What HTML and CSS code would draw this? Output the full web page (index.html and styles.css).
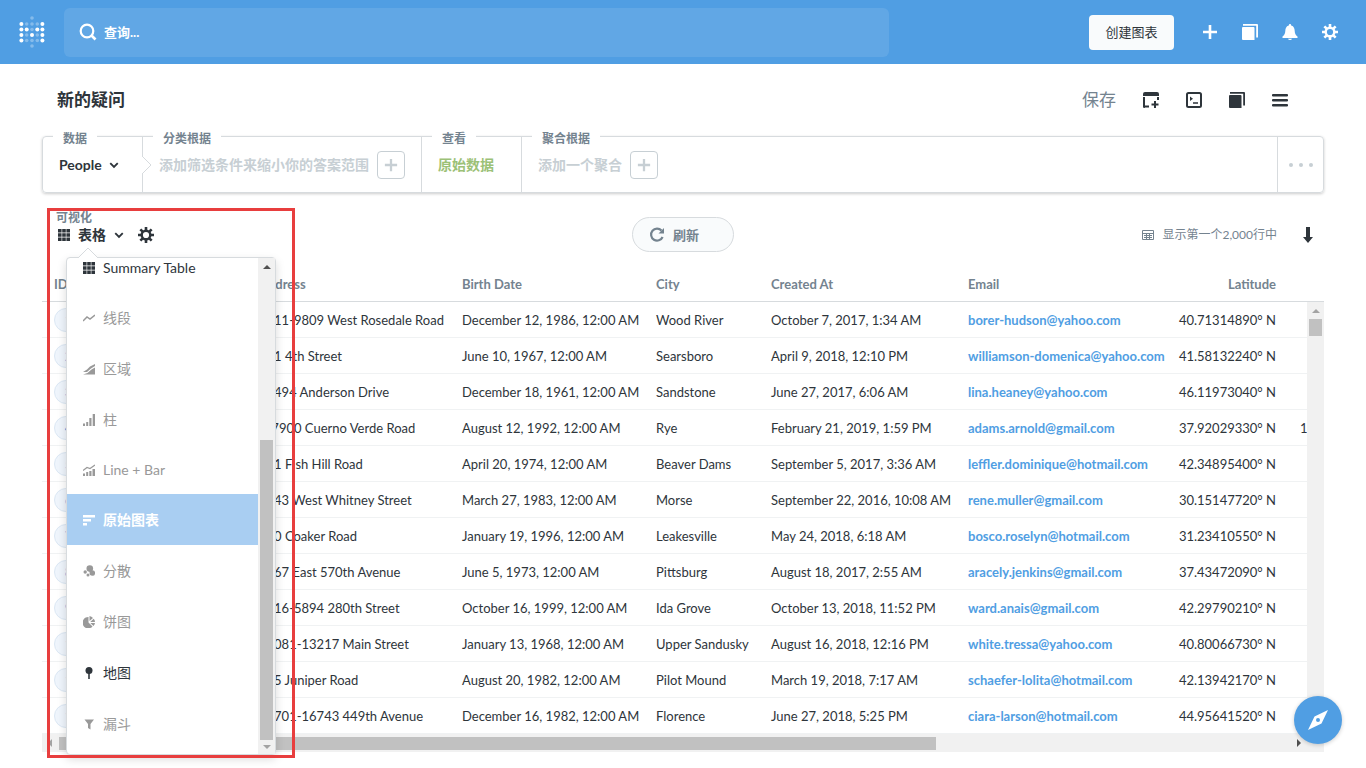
FILE: index.html
```html
<!DOCTYPE html>
<html lang="zh-CN">
<head>
  <meta charset="UTF-8">
  <meta name="viewport" content="width=device-width, initial-scale=1.0">
  <title>新的疑问</title>
  <link rel="stylesheet" href="styles.css">
</head>
<body>
  <svg class="defs" width="0" height="0">
    <symbol id="i-search" viewBox="0 0 18 18"><circle cx="8" cy="8" r="6.3" fill="none" stroke="currentColor" stroke-width="2.2"/><path d="M12.5 12.5l4 4" stroke="currentColor" stroke-width="2.6"/></symbol>
    <symbol id="i-plus" viewBox="0 0 16 16"><path d="M8 1v14M1 8h14" stroke="currentColor" stroke-width="2.6"/></symbol>
    <symbol id="i-stack" viewBox="0 0 16 16"><path fill="currentColor" d="M0 4q0-1 1-1h10.500q1 0 1 1v12H1q-1 0-1-1zM1 0H15q1 0 1 1v12.500h-1.800V1.800H1z"/></symbol>
    <symbol id="i-bell" viewBox="0 0 16 16"><path fill="currentColor" d="M8 0q1.200 0 1.200 1.400C12 2.200 12.600 4.500 12.700 7c.1 2.500 1 4.500 2.800 5.500V14H.5v-1.500C2.300 11.500 3.200 9.500 3.300 7c.1-2.500.7-4.800 3.500-5.600Q6.800 0 8 0zM6 14.800h4q-.3 1.200-2 1.200t-2-1.200z"/></symbol>
    <symbol id="i-gear" viewBox="0 0 16 16"><circle cx="8" cy="8" r="4.300" fill="none" stroke="currentColor" stroke-width="2.400"/><path d="M8 0v3M8 13v3M0 8h3M13 8h3M2.340 2.340l2.100 2.100M11.560 11.560l2.100 2.100M2.340 13.660l2.100-2.100M11.560 4.440l2.100-2.100" stroke="currentColor" stroke-width="2.600"/></symbol>
    <symbol id="i-grid" viewBox="0 0 12 12"><path fill="currentColor" d="M0 0h3.600v3.600H0zM4.200 0h3.600v3.600H4.200zM8.400 0H12v3.600H8.400zM0 4.200h3.600v3.600H0zM4.200 4.200h3.600v3.600H4.200zM8.400 4.200H12v3.600H8.400zM0 8.400h3.600V12H0zM4.200 8.400h3.600V12H4.200zM8.400 8.400H12V12H8.400z"/></symbol>
    <symbol id="i-chevron" viewBox="0 0 8 8"><path d="M1 2.500l3 3 3-3" fill="none" stroke="currentColor" stroke-width="1.500"/></symbol>
  </svg>

  <header class="nav">
    <a class="logo" href="#" aria-label="Metabase">
      <svg width="26" height="32" viewBox="0 0 26 32" fill="#fff">
        <g opacity=".3">
          <circle cx="13" cy="2" r="1.800"/><circle cx="7.700" cy="8" r="1.800"/><circle cx="13" cy="8" r="1.800"/><circle cx="18.300" cy="8" r="1.800"/>
          <circle cx="13" cy="13.500" r="1.800"/><circle cx="7.700" cy="19" r="1.800"/><circle cx="18.300" cy="19" r="1.800"/>
          <circle cx="7.700" cy="24.500" r="1.800"/><circle cx="13" cy="24.500" r="1.800"/><circle cx="18.300" cy="24.500" r="1.800"/><circle cx="13" cy="30" r="1.800"/>
        </g>
        <circle cx="2.400" cy="8" r="2"/><circle cx="23.400" cy="8" r="2"/>
        <circle cx="2.400" cy="13.500" r="2"/><circle cx="7.700" cy="13.500" r="2"/><circle cx="18.300" cy="13.500" r="2"/><circle cx="23.400" cy="13.500" r="2"/>
        <circle cx="2.400" cy="19" r="2"/><circle cx="13" cy="19" r="2"/><circle cx="23.400" cy="19" r="2"/>
        <circle cx="2.400" cy="24.500" r="2"/><circle cx="23.400" cy="24.500" r="2"/>
      </svg>
    </a>
    <label class="search">
      <svg width="18" height="18"><use href="#i-search"/></svg>
      <input type="text" placeholder="查询..." aria-label="查询">
    </label>
    <div class="nav-actions">
      <button class="create">创建图表</button>
      <a href="#" aria-label="新建"><svg width="16" height="16"><use href="#i-plus"/></svg></a>
      <a href="#" aria-label="浏览"><svg width="16" height="16"><use href="#i-stack"/></svg></a>
      <a href="#" aria-label="通知"><svg width="16" height="16"><use href="#i-bell"/></svg></a>
      <a href="#" aria-label="设置"><svg width="16" height="16"><use href="#i-gear"/></svg></a>
    </div>
  </header>

  <main>
    <div class="title-bar">
      <h1>新的疑问</h1>
      <div class="title-actions">
        <a class="save" href="#">保存</a>
        <a href="#" aria-label="添加到仪表盘"><svg width="16" height="16" viewBox="0 0 16 16"><path d="M1 5v9.500h5M15 5v3" fill="none" stroke="currentColor" stroke-width="2"/><path fill="currentColor" d="M0 4V2q0-2 2-2h12q2 0 2 2v2zM0 13h2v3q-2 0-2-2z"/><path d="M12 9v7M8.500 12.500h7" stroke="currentColor" stroke-width="2"/></svg></a>
        <a href="#" aria-label="SQL"><svg width="16" height="16" viewBox="0 0 16 16"><rect x="1" y="1" width="14" height="14" rx="1.500" fill="none" stroke="currentColor" stroke-width="2"/><path fill="currentColor" d="M4 4.500l3 2.200-3 2.200zM7 10.200h5v1.600H7z"/></svg></a>
        <a href="#" aria-label="数据参考"><svg width="16" height="16"><use href="#i-stack"/></svg></a>
        <a href="#" aria-label="菜单"><svg width="16" height="16" viewBox="0 0 16 16"><path d="M1 3.200h14M1 8.200h14M1 13.200h14" stroke="currentColor" stroke-width="2.400" stroke-linecap="round"/></svg></a>
      </div>
    </div>

    <section class="query">
      <div class="part part-data">
        <span class="legend">数据</span>
        <button class="source">People <svg width="10" height="10"><use href="#i-chevron"/></svg></button>
      </div>
      <div class="part part-filter">
        <span class="legend">分类根据</span>
        <svg class="notch" width="10" height="20" viewBox="0 0 10 20"><path d="M0 1l9 9-9 9" fill="#fff" stroke="#d7dbde"/></svg>
        <span class="hint">添加筛选条件来缩小你的答案范围</span>
        <button class="add" aria-label="添加筛选"><svg width="14" height="14"><use href="#i-plus"/></svg></button>
      </div>
      <div class="part part-view">
        <span class="legend">查看</span>
        <a class="raw" href="#">原始数据</a>
      </div>
      <div class="part part-group">
        <span class="legend">聚合根据</span>
        <span class="hint">添加一个聚合</span>
        <button class="add" aria-label="添加聚合"><svg width="14" height="14"><use href="#i-plus"/></svg></button>
      </div>
      <button class="part more" aria-label="更多"><i></i><i></i><i></i></button>
    </section>

    <section class="toolbar">
      <div class="viz">
        <span class="viz-label">可视化</span>
        <div class="viz-row">
          <button class="viz-type"><svg width="12" height="12"><use href="#i-grid"/></svg>表格<svg width="10" height="10"><use href="#i-chevron"/></svg></button>
          <button class="viz-set" aria-label="图表设置"><svg width="16" height="16"><use href="#i-gear"/></svg></button>
        </div>

        <div class="menu">
          <svg class="menu-tip" width="22" height="11" viewBox="0 0 22 11"><path d="M1 11L11 1l10 10" fill="#fff" stroke="#d7dbde"/></svg>
          <ul>
            <li class="latin on"><svg width="12" height="12"><use href="#i-grid"/></svg>Summary Table</li>
            <li><svg width="12" height="12" viewBox="0 0 12 12"><path d="M0 9l4-4 3 2 5-4" fill="none" stroke="currentColor" stroke-width="1.500"/></svg>线段</li>
            <li><svg width="12" height="12" viewBox="0 0 12 12"><path fill="currentColor" d="M0 9l4-2.500 3-3L12 1v2L8 5.500 4 9zM0 11.500L4.500 10 8.500 6.500 12 4.500v7z"/></svg>区域</li>
            <li><svg width="12" height="12" viewBox="0 0 12 12"><path fill="currentColor" d="M0 9.500h2V12H0zM3.200 8h2v4h-2zM6.300 4h2.200v8H6.300zM9.700 0H12v12H9.700z"/></svg>柱</li>
            <li class="latin"><svg width="12" height="12" viewBox="0 0 12 12"><path fill="currentColor" d="M0 9.500h2V12H0zM3.200 8h2v4h-2zM6.300 7h2.200v5H6.300zM9.500 5H12v7H9.500z"/><path d="M0 6.500l4-3 3 1 5-3.500" fill="none" stroke="currentColor" stroke-width="1.200"/></svg>Line + Bar</li>
            <li class="active"><svg width="12" height="12" viewBox="0 0 12 12"><path fill="currentColor" d="M0 1h12v2.500H0zM0 5h8v2.500H0zM0 9h4v2.500H0z"/></svg>原始图表</li>
            <li><svg width="12" height="12" viewBox="0 0 12 12"><g fill="currentColor"><circle cx="6.800" cy="3.600" r="3.300"/><circle cx="9.300" cy="8" r="2.800"/><circle cx="2.200" cy="7" r="1.700"/><circle cx="5" cy="10" r="1.500"/></g></svg>分散</li>
            <li><svg width="12" height="12" viewBox="0 0 12 12"><path fill="currentColor" d="M5.500 1v5.500l4 4A5.700 5.700 0 1 1 5.500 1zM6.500 0A5.500 5.500 0 0 1 10 2L6.500 5zM10.700 2.700Q12 4.300 12 6H7.200zM7.300 7H12q-.2 1.700-1.500 3z"/></svg>饼图</li>
            <li class="on"><svg width="12" height="12" viewBox="0 0 12 12"><circle cx="6" cy="3.500" r="3.500" fill="currentColor"/><path d="M6 6v6" stroke="currentColor" stroke-width="1.600"/></svg>地图</li>
            <li><svg width="12" height="12" viewBox="0 0 12 12"><path fill="currentColor" d="M1.500 1.500h9.500L7.500 6v5.500L5 10V6z"/></svg>漏斗</li>
          </ul>
          <div class="menu-scroll"><b class="arrow up dark"></b><i></i><b class="arrow down"></b></div>
        </div>
      </div>

      <button class="refresh"><svg width="16" height="16" viewBox="0 0 16 16"><path d="M12.500 3.500A6 6 0 1 0 13.600 10" fill="none" stroke="currentColor" stroke-width="2.200"/><path fill="currentColor" d="M15 1v5.500H9.500z"/></svg>刷新</button>

      <div class="info">
        <svg width="12" height="12" viewBox="0 0 12 12"><path d="M.5 1.500h11v9H.5zM.5 4.500h11M2 6.500h8M2 8.500h8M4.500 4.500v6M7.500 4.500v6" fill="none" stroke="currentColor"/></svg>
        <span>显示第一个2,000行中</span>
        <a href="#" aria-label="下载"><svg width="10" height="16" viewBox="0 0 10 16"><path fill="currentColor" d="M3 0h4v10h3l-5 6-5-6h3z"/></svg></a>
      </div>
      <div class="marker"></div>
    </section>

    <section class="results">
      <div class="clip">
        <table>
          <colgroup><col class="c-id"><col class="c-addr"><col class="c-birth"><col class="c-city"><col class="c-created"><col class="c-email"><col class="c-lat"><col class="c-lon"></colgroup>
          <thead>
            <tr><th>ID</th><th>Address</th><th>Birth Date</th><th>City</th><th>Created At</th><th>Email</th><th class="num">Latitude</th><th></th></tr>
          </thead>
          <tbody>
            <tr><td><a class="pk" href="#">1</a></td><td>9611-9809 West Rosedale Road</td><td>December 12, 1986, 12:00 AM</td><td>Wood River</td><td>October 7, 2017, 1:34 AM</td><td><a href="#">borer-hudson@yahoo.com</a></td><td class="num">40.71314890° N</td><td></td></tr>
            <tr><td><a class="pk" href="#">2</a></td><td>101 4th Street</td><td>June 10, 1967, 12:00 AM</td><td>Searsboro</td><td>April 9, 2018, 12:10 PM</td><td><a href="#">williamson-domenica@yahoo.com</a></td><td class="num">41.58132240° N</td><td></td></tr>
            <tr><td><a class="pk" href="#">3</a></td><td>29494 Anderson Drive</td><td>December 18, 1961, 12:00 AM</td><td>Sandstone</td><td>June 27, 2017, 6:06 AM</td><td><a href="#">lina.heaney@yahoo.com</a></td><td class="num">46.11973040° N</td><td></td></tr>
            <tr><td><a class="pk" href="#">4</a></td><td>2-7900 Cuerno Verde Road</td><td>August 12, 1992, 12:00 AM</td><td>Rye</td><td>February 21, 2019, 1:59 PM</td><td><a href="#">adams.arnold@gmail.com</a></td><td class="num">37.92029330° N</td><td>1</td></tr>
            <tr><td><a class="pk" href="#">5</a></td><td>761 Fish Hill Road</td><td>April 20, 1974, 12:00 AM</td><td>Beaver Dams</td><td>September 5, 2017, 3:36 AM</td><td><a href="#">leffler.dominique@hotmail.com</a></td><td class="num">42.34895400° N</td><td></td></tr>
            <tr><td><a class="pk" href="#">6</a></td><td>1243 West Whitney Street</td><td>March 27, 1983, 12:00 AM</td><td>Morse</td><td>September 22, 2016, 10:08 AM</td><td><a href="#">rene.muller@gmail.com</a></td><td class="num">30.15147720° N</td><td></td></tr>
            <tr><td><a class="pk" href="#">7</a></td><td>630 Coaker Road</td><td>January 19, 1996, 12:00 AM</td><td>Leakesville</td><td>May 24, 2018, 6:18 AM</td><td><a href="#">bosco.roselyn@hotmail.com</a></td><td class="num">31.23410550° N</td><td></td></tr>
            <tr><td><a class="pk" href="#">8</a></td><td>1167 East 570th Avenue</td><td>June 5, 1973, 12:00 AM</td><td>Pittsburg</td><td>August 18, 2017, 2:55 AM</td><td><a href="#">aracely.jenkins@gmail.com</a></td><td class="num">37.43472090° N</td><td></td></tr>
            <tr><td><a class="pk" href="#">9</a></td><td>5816-5894 280th Street</td><td>October 16, 1999, 12:00 AM</td><td>Ida Grove</td><td>October 13, 2018, 11:52 PM</td><td><a href="#">ward.anais@gmail.com</a></td><td class="num">42.29790210° N</td><td></td></tr>
            <tr><td><a class="pk" href="#">10</a></td><td>13081-13217 Main Street</td><td>January 13, 1968, 12:00 AM</td><td>Upper Sandusky</td><td>August 16, 2018, 12:16 PM</td><td><a href="#">white.tressa@yahoo.com</a></td><td class="num">40.80066730° N</td><td></td></tr>
            <tr><td><a class="pk" href="#">11</a></td><td>785 Juniper Road</td><td>August 20, 1982, 12:00 AM</td><td>Pilot Mound</td><td>March 19, 2018, 7:17 AM</td><td><a href="#">schaefer-lolita@hotmail.com</a></td><td class="num">42.13942170° N</td><td></td></tr>
            <tr><td><a class="pk" href="#">12</a></td><td>16701-16743 449th Avenue</td><td>December 16, 1982, 12:00 AM</td><td>Florence</td><td>June 27, 2018, 5:25 PM</td><td><a href="#">ciara-larson@hotmail.com</a></td><td class="num">44.95641520° N</td><td></td></tr>
          </tbody>
        </table>
        <div class="hscroll"><b class="arrow left"></b><i></i><b class="arrow right dark"></b></div>
      </div>
      <div class="vside">
        <div class="vscroll"><b class="arrow up"></b><i></i></div>
      </div>
    </section>
  </main>

  <button class="fab" aria-label="帮助"><svg width="20" height="20" viewBox="0 0 20 20"><path fill="#fff" fill-rule="evenodd" d="M20 0l-6.500 13.500L0 20 6.500 6.500zM10 8a2 2 0 1 0 0 4 2 2 0 0 0 0-4z"/></svg></button>
</body>
</html>
```
FILE: styles.css
```css
* {
  box-sizing: border-box;
}
body {
  margin: 0;
  min-height: 100vh;
  font-family: Lato, "Noto Sans CJK SC", sans-serif;
  font-size: 13px;
  line-height: 18px;
  color: #2e353b;
  background: #fff;
}
a {
  color: inherit;
  text-decoration: none;
}
button {
  font: inherit;
  color: inherit;
  background: none;
  border: none;
  padding: 0;
  cursor: pointer;
}
svg {
  display: block;
  flex: none;
}
.defs {
  position: absolute;
}

/* top nav */
.nav {
  display: flex;
  align-items: center;
  height: 64px;
  padding: 0 28px 0 19px;
  background: #509ee3;
  color: #fff;
}
.logo {
  width: 45px;
}
.search {
  display: flex;
  align-items: center;
  gap: 7px;
  flex: 1;
  max-width: 825px;
  height: 49px;
  padding: 0 15px;
  border-radius: 6px;
  background: rgba(255,255,255,0.1);
}
.search input {
  flex: 1;
  border: none;
  outline: none;
  padding: 0;
  background: none;
  font: bold 13px Lato, "Noto Sans CJK SC", sans-serif;
  color: #fff;
}
.search input::placeholder {
  color: #fff;
}
.nav-actions {
  display: flex;
  align-items: center;
  gap: 24px;
  margin-left: auto;
}
.create {
  width: 85px;
  height: 35px;
  margin-right: 4px;
  border-radius: 4px;
  background: #f9fbfc;
  color: #2e353b;
}

main {
  padding: 0 42px;
}

/* title */
.title-bar {
  display: flex;
  align-items: center;
  justify-content: space-between;
  height: 72px;
  padding: 0 36px 0 15px;
}
h1 {
  margin: 0;
  font-size: 17px;
  line-height: 24px;
}
.title-actions {
  display: flex;
  align-items: center;
  gap: 27px;
}
.save {
  font-size: 17px;
  line-height: 24px;
  color: #74838f;
}

/* query builder */
.query {
  display: flex;
  height: 57px;
  border: 1px solid #d7dbde;
  border-radius: 4px;
  box-shadow: 0 1px 3px rgba(0,0,0,0.2);
  font-size: 14px;
  font-weight: bold;
}
.part {
  position: relative;
  display: flex;
  align-items: center;
  padding: 0 16px;
}
.part + .part {
  border-left: 1px solid #d7dbde;
}
.part-data {
  width: 99px;
}
.part-view {
  width: 100px;
}
.part-group {
  flex: 1;
}
.legend {
  position: absolute;
  left: 10px;
  top: -7px;
  padding: 0 10px;
  background: #fff;
  color: #74838f;
  font-size: 12px;
  white-space: nowrap;
}
.source {
  display: flex;
  align-items: center;
  gap: 7px;
  font-weight: bold;
}
.notch {
  position: absolute;
  left: -1px;
  top: 18px;
}
.hint {
  color: #c7cfd4;
  white-space: nowrap;
}
.add {
  display: flex;
  align-items: center;
  justify-content: center;
  width: 28px;
  height: 28px;
  margin-left: 8px;
  border: 1px solid #c7cfd4;
  border-radius: 4px;
  color: #c7cfd4;
}
.raw {
  color: #9cc177;
}
.more {
  gap: 6px;
  width: 46px;
  justify-content: center;
}
.more i {
  flex: none;
  width: 4px;
  height: 4px;
  border-radius: 50%;
  background: #c7cfd4;
}

/* visualization toolbar */
.toolbar {
  position: relative;
  display: grid;
  grid-template-columns: 1fr auto 1fr;
  padding: 17px 0 16px;
}
.viz {
  position: relative;
  padding-left: 14px;
}
.viz-label {
  display: block;
  line-height: 16px;
  font-size: 12px;
  font-weight: bold;
  color: #74838f;
}
.viz-row {
  display: flex;
  align-items: center;
  gap: 14px;
  padding-left: 2px;
}
.viz-type {
  display: flex;
  align-items: center;
  gap: 8px;
  font-size: 14px;
  font-weight: bold;
}
.refresh {
  display: flex;
  align-items: center;
  gap: 8px;
  width: 102px;
  height: 35px;
  margin-top: 7px;
  padding-left: 16px;
  border: 1px solid #d7dbde;
  border-radius: 18px;
  background: #f9fbfc;
  color: #74838f;
  font-weight: bold;
}
.info {
  display: flex;
  align-items: center;
  justify-content: flex-end;
  gap: 8px;
  height: 35px;
  margin-top: 7px;
  padding-right: 11px;
  color: #74838f;
  font-size: 12px;
}
.info a {
  margin-left: 18px;
  color: #2e353b;
}

/* chart type menu */
.menu {
  position: absolute;
  z-index: 2;
  left: 24px;
  top: 47px;
  display: flex;
  width: 210px;
  height: 498px;
  border: 1px solid #d7dbde;
  border-radius: 4px;
  background: #fff;
  box-shadow: 0 4px 10px rgba(0,0,0,0.15);
}
.menu-tip {
  position: absolute;
  left: 10px;
  top: -11px;
}
.menu ul {
  display: flex;
  flex-direction: column;
  justify-content: flex-end;
  flex: 1;
  margin: 0;
  padding: 0 0 5px;
  overflow: hidden;
  list-style: none;
  font-size: 14px;
}
.menu li {
  display: flex;
  align-items: center;
  flex: none;
  gap: 8px;
  height: 51px;
  padding-left: 16px;
  color: #999;
}
.menu .latin {
  height: 49px;
}
.menu .on {
  color: #2e353b;
}
.menu .active {
  background: #a9cef2;
  color: #fff;
  font-weight: bold;
}
.menu-scroll {
  display: flex;
  flex-direction: column;
  align-items: center;
  width: 17px;
  padding: 7px 0 5px;
  background: #f1f1f1;
}
.menu-scroll i {
  width: 13px;
  height: 300px;
  margin: auto 0 5px;
  background: #c1c1c1;
}

/* scrollbar arrows */
.arrow {
  flex: none;
  width: 0;
  height: 0;
  border: 4px solid transparent;
  color: #a3a3a3;
}
.dark {
  color: #505050;
}
.up {
  border-top: 0;
  border-bottom-color: currentColor;
}
.down {
  border-bottom: 0;
  border-top-color: currentColor;
}
.left {
  border-left: 0;
  border-right-color: currentColor;
}
.right {
  border-right: 0;
  border-left-color: currentColor;
}

/* red highlight frame */
.marker {
  position: absolute;
  z-index: 3;
  left: 5px;
  top: 15px;
  width: 248px;
  height: 550px;
  border: 3px solid #e83e3e;
  pointer-events: none;
}

/* results table */
.results {
  display: flex;
}
.clip {
  flex: 1;
  min-width: 0;
  overflow: hidden;
}
table {
  table-layout: fixed;
  width: 1346px;
  border-collapse: separate;
  border-spacing: 0;
}
.c-id { width: 205px; }
.c-addr { width: 203px; }
.c-birth { width: 194px; }
.c-city { width: 115px; }
.c-created { width: 197px; }
.c-email { width: 210px; }
.c-lat { width: 122px; }
.c-lon { width: 100px; }
th, td {
  padding: 0 12px;
  text-align: left;
  white-space: nowrap;
}
th {
  height: 34px;
  padding-bottom: 2px;
  border-bottom: 1px solid #d7dbde;
  color: #74838f;
}
td {
  height: 36px;
  border-bottom: 1px solid #f0f2f3;
}
td a {
  color: #509ee3;
  font-weight: bold;
}
th.num, td.num {
  text-align: right;
}
.pk {
  display: inline-block;
  height: 24px;
  padding: 0 10px;
  border: 1px solid #dce8f4;
  border-radius: 12px;
  background: #eff5fc;
  line-height: 22px;
  vertical-align: middle;
}
.hscroll {
  display: flex;
  align-items: center;
  justify-content: space-between;
  height: 18px;
  padding: 0 6px;
  background: #f1f1f1;
}
.hscroll i {
  width: 70%;
  height: 13px;
  margin: 0 auto 0 7px;
  background: #c1c1c1;
}
.vside {
  display: flex;
  width: 17px;
  padding-top: 33px;
  background: #fff;
}
.vscroll {
  display: flex;
  flex-direction: column;
  align-items: center;
  gap: 6px;
  flex: 1;
  padding-top: 7px;
  border-top: 1px solid #d7dbde;
  background: #f1f1f1;
}
.vscroll i {
  width: 13px;
  height: 17px;
  background: #c1c1c1;
}

.fab {
  position: fixed;
  z-index: 4;
  right: 24px;
  bottom: 24px;
  display: flex;
  align-items: center;
  justify-content: center;
  width: 48px;
  height: 48px;
  border-radius: 50%;
  background: #509ee3;
  box-shadow: 0 1px 4px rgba(0,0,0,0.2);
}
```
